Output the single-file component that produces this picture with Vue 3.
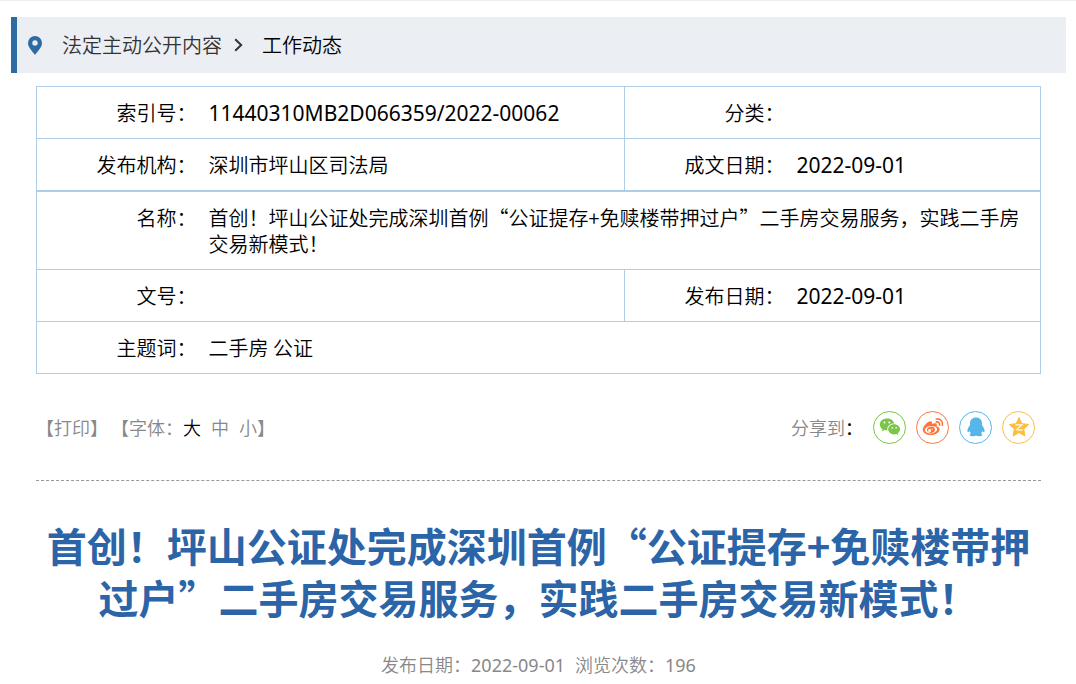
<template>
  <main class="page">
    <nav class="crumbs" aria-label="当前位置">
      <svg class="pin" viewBox="0 0 14 19" width="14" height="19">
        <path d="M7 0a7 7 0 00-7 7c0 4.6 4.4 8.300 7 12 2.600-3.700 7-7.400 7-12a7 7 0 00-7-7zm0 4.200a2.700 2.700 0 110 5.400 2.700 2.700 0 010-5.400z" fill="#2d6ca2"/>
      </svg>
      <a href="#">法定主动公开内容</a>
      <svg class="arrow" viewBox="0 0 9 14" width="9" height="14">
        <path d="M1.200 1.200L7.200 7l-6 5.800" fill="none" stroke="#333" stroke-width="2"/>
      </svg>
      <a href="#" class="current">工作动态</a>
    </nav>

    <div class="content">
      <table class="info">
        <colgroup>
          <col class="col-label">
          <col>
          <col class="col-label">
          <col class="col-date">
        </colgroup>
        <tbody>
          <tr>
            <th scope="row">索引号：</th>
            <td class="num">11440310MB2D066359/2022-00062</td>
            <th scope="row" class="split">分类：</th>
            <td></td>
          </tr>
          <tr class="thick">
            <th scope="row">发布机构：</th>
            <td>深圳市坪山区司法局</td>
            <th scope="row" class="split">成文日期：</th>
            <td class="num">2022-09-01</td>
          </tr>
          <tr>
            <th scope="row">名称：</th>
            <td colspan="3">{{ title }}</td>
          </tr>
          <tr>
            <th scope="row">文号：</th>
            <td></td>
            <th scope="row" class="split">发布日期：</th>
            <td class="num">2022-09-01</td>
          </tr>
          <tr>
            <th scope="row">主题词：</th>
            <td colspan="3">二手房 公证</td>
          </tr>
        </tbody>
      </table>

      <div class="tools">
        <div class="tools-left">
          <button type="button" @click="print">【打印】</button>
          <div class="sizes">
            <span>【字体：</span>
            <button
              v-for="s in sizes"
              :key="s"
              type="button"
              :class="{ active: s === size }"
              @click="size = s"
            >{{ s }}</button>
            <span>】</span>
          </div>
        </div>
        <div class="share">
          <span>分享到<b>：</b></span>
          <a href="#" class="wechat" aria-label="微信">
            <svg viewBox="0 0 22 20" width="22" height="20">
              <path d="M8 1.500C3.900 1.500.8 4.100.8 7.500c0 1.900 1 3.500 2.600 4.700l-.7 2.300 2.600-1.400c.9.300 1.700.4 2.700.4h.5a5.300 5.300 0 01-.2-1.400c0-3.200 2.900-5.700 6.500-5.700h.5C14.600 3.500 11.700 1.500 8 1.500z" fill="currentColor"/>
              <path d="M21 12.300c0-2.800-2.700-5-5.900-5s-5.900 2.200-5.900 5 2.600 5.100 5.900 5.100c.7 0 1.400-.1 2.100-.3l2.100 1.100-.6-1.900c1.400-1 2.300-2.400 2.300-4z" fill="currentColor"/>
              <g fill="#fff">
                <circle cx="5.500" cy="5.400" r="1"/>
                <circle cx="10.300" cy="5.400" r="1"/>
                <circle cx="13.200" cy="10.900" r=".8"/>
                <circle cx="17.100" cy="10.900" r=".8"/>
              </g>
            </svg>
          </a>
          <a href="#" class="weibo" aria-label="微博">
            <svg viewBox="0 0 22 20" width="22" height="20">
              <path fill-rule="evenodd" d="M9.200 4.400c1.100.3 1 1.500.6 2.600 1.900-.8 4.800-1.200 5 .6.100.6-.1 1.100-.2 1.600 1.700.5 3 1.400 3 3.100 0 3-3.900 5.800-8.600 5.800S.8 15.800.8 12.800c0-3.600 5.500-9.200 8.400-8.400zm-.4 4.500c-3.500.2-6 2.100-5.800 4.300.2 2.100 3 3.500 6.300 3.200 3.400-.3 6-2.300 5.800-4.400-.2-2-3-3.300-6.300-3.100z" fill="currentColor"/>
              <path fill-rule="evenodd" d="M8.600 9.700c2.300-.5 4.400.7 4.400 2.700s-2 3.500-4.200 3.500-3.900-1.300-3.900-3.100 1.600-2.700 3.700-3.100zm-1 2.400a1.500 1.500 0 100 3 1.500 1.500 0 000-3zm2.500-.7a.7.7 0 100 1.400.7.7 0 000-1.400z" fill="currentColor"/>
              <path d="M14.300 2c3.700-.7 6.900 2.300 6.100 6.300M14.300 4.900c2.100-.4 3.700 1.200 3.300 3.200" fill="none" stroke="currentColor" stroke-width="1.600" stroke-linecap="round"/>
            </svg>
          </a>
          <a href="#" class="qq" aria-label="QQ">
            <svg viewBox="0 0 22 20" width="22" height="20">
              <path d="M11 .6c-3.800 0-6 2.500-6 5.600v1.700C4 9.500 2.400 11.500 2.400 13.600c0 1.300.5 1.700 1 1.500.5-.2 1-.8 1.300-1.200.2.900.7 1.700 1.400 2.400-.8.300-1.400.8-1.400 1.400 0 1 1.700 1.500 3.500 1.500 1.200 0 2.300-.3 2.800-.8.500.5 1.600.8 2.800.8 1.800 0 3.500-.5 3.500-1.500 0-.6-.6-1.100-1.400-1.400.7-.7 1.200-1.500 1.400-2.400.3.400.8 1 1.300 1.200.5.200 1-.2 1-1.500 0-2.100-1.600-4.100-2.600-5.700V6.200c0-3.100-2.200-5.600-6-5.600z" fill="currentColor"/>
            </svg>
          </a>
          <a href="#" class="qzone" aria-label="QQ空间">
            <svg viewBox="0 0 22 20" width="22" height="20">
              <path d="M11 .5l2.900 6.200 6.700.8-4.900 4.600 1.300 6.900-6-3.400L5 19l1.300-6.900L1.400 7.500l6.700-.8z" fill="currentColor" stroke="currentColor" stroke-linejoin="round"/>
              <path d="M7.500 7.900H14l-5.500 4.800c2.200.5 4.400.5 6.600.1" fill="none" stroke="#fff" stroke-width="1.100"/>
            </svg>
          </a>
        </div>
      </div>

      <h1>{{ title }}</h1>
      <p class="meta">
        <span>发布日期：<span class="digits">2022-09-01</span></span>
        <span>浏览次数：<span class="digits">196</span></span>
      </p>
    </div>
  </main>
</template>

<script setup>
import { ref } from 'vue'

const title = '首创！坪山公证处完成深圳首例“公证提存+免赎楼带押过户”二手房交易服务，实践二手房交易新模式！'
const sizes = ['大', '中', '小']
const size = ref('大')

function print() {
  window.print()
}
</script>

<style>
body {
  background: #fff;
}
</style>

<style scoped>
.page {
  border-top: 1px solid #eee;
  padding: 16px 10px 0 11px;
  font-family: "Noto Sans CJK SC", sans-serif;
  font-size: 20px;
  font-weight: 350;
  line-height: 26px;
  color: #000;
}

a {
  color: inherit;
  text-decoration: none;
}

.crumbs {
  display: flex;
  align-items: center;
  height: 56px;
  padding-left: 11px;
  border-left: 6px solid #2d6ca2;
  background: #ebeef2;
  color: #333;
}

.pin {
  margin-right: 20px;
}

.arrow {
  margin: 0 19px 0 12px;
}

.current {
  color: #000;
}

.content {
  padding: 13px 25px 0;
}

.info {
  width: 100%;
  table-layout: fixed;
  border-collapse: collapse;
  border: 1px solid #afcde6;
}

.col-label {
  width: 160px;
}

.col-date {
  width: 25.5%;
}

.info tr {
  border-bottom: 1px solid #afcde6;
}

.info tr.thick {
  border-bottom-width: 2px;
}

.info th,
.info td {
  height: 26px;
  padding: 13px 0 12px;
  font-weight: 350;
  vertical-align: top;
}

.info th {
  text-align: right;
}

.info td {
  padding-left: 12px;
  padding-right: 12px;
}

.info .split {
  border-left: 1px solid #afcde6;
}

.info .num {
  font-family: "Noto Sans", sans-serif;
  font-size: 21px;
  font-weight: 400;
}

.tools {
  display: flex;
  align-items: center;
  justify-content: space-between;
  height: 106px;
  border-bottom: 1px dashed #999;
  font-size: 18px;
  color: #888;
}

.tools-left,
.sizes,
.share {
  display: flex;
  align-items: center;
}

.tools-left {
  gap: 3px;
}

.tools button {
  padding: 0;
  border: 0;
  background: none;
  font: inherit;
  color: inherit;
  cursor: pointer;
}

.sizes button + button {
  margin-left: 10px;
}

.sizes .active {
  color: #000;
}

.share {
  gap: 10px;
  padding-right: 6px;
}

.share b {
  font-weight: 400;
  color: #000;
}

.share a {
  display: flex;
  align-items: center;
  justify-content: center;
  box-sizing: border-box;
  width: 33px;
  height: 33px;
  border: 1px solid;
  border-radius: 50%;
}

.wechat {
  color: #7bc549;
}

.weibo {
  color: #ff763b;
}

.qq {
  color: #56b6e7;
}

.qzone {
  color: #fdbe3d;
}

h1 {
  margin: 38px 0 0;
  font-size: 40px;
  font-weight: 700;
  line-height: 52px;
  text-align: center;
  color: #2b64a7;
}

.meta {
  display: flex;
  justify-content: center;
  gap: 10px;
  margin: 28px 0 0;
  font-size: 18px;
  color: #888;
}

.digits {
  font-family: "Noto Sans", sans-serif;
  font-weight: 400;
}
</style>
